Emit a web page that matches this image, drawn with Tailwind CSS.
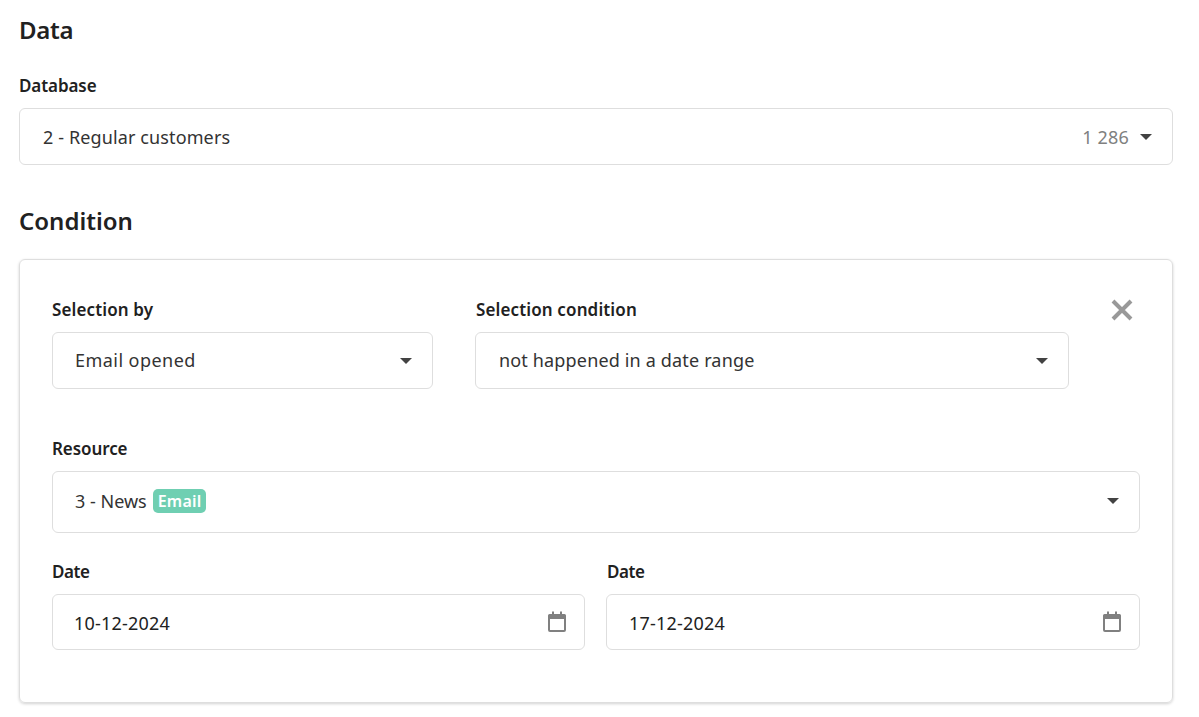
<!DOCTYPE html>
<html lang="en">
<head>
  <meta charset="UTF-8">
  <title>Condition</title>
  <script src="https://cdn.jsdelivr.net/npm/@tailwindcss/browser@4"></script>
</head>
<body class="bg-white h-[717px] overflow-hidden font-['Noto_Sans',sans-serif] text-[#212121]">
  <div class="w-[1154px] ml-[19px]">
    <!-- Data -->
    <h2 class="h-[24px] mt-[18px] text-[24px] leading-[24px] font-semibold tracking-[-0.3px]">Data</h2>
    <label class="block mt-[32px] h-[24px] text-[17px] leading-[24px] font-semibold tracking-[-0.08px]">Database</label>
    <div class="mt-[10px] h-[57px] flex items-center justify-between pl-[23px] pr-[20px] pt-[1px] border border-[#dedede] rounded-[6px] text-[18px] text-[#333] tracking-[0.12px]">
      <span>2 - Regular customers</span>
      <span class="flex items-center gap-[11px]">
        <span class="text-[#808080] tracking-[0.2px]">1 286</span>
        <span class="w-0 h-0 border-x-[6px] border-x-transparent border-t-[6px] border-t-[#424242]"></span>
      </span>
    </div>

    <!-- Condition -->
    <h2 class="mt-[42px] h-[28px] text-[24px] leading-[28px] font-semibold">Condition</h2>
    <div class="mt-[24px] h-[444px] px-[32px] pt-[38px] border border-[#dedede] rounded-[6px] shadow-[0_1px_3px_rgba(0,0,0,0.18)]">
      <div class="flex">
        <div class="w-[381px]">
          <label class="block h-[24px] text-[17px] leading-[24px] font-semibold tracking-[0.13px]">Selection by</label>
          <div class="mt-[10px] h-[57px] flex items-center justify-between pl-[22px] pr-[20px] border border-[#dedede] rounded-[6px] text-[18px] text-[#333] tracking-[0.45px]">
            <span>Email opened</span>
            <span class="w-0 h-0 border-x-[6px] border-x-transparent border-t-[6px] border-t-[#424242]"></span>
          </div>
        </div>
        <div class="w-[594px] ml-[42px]">
          <label class="block h-[24px] pl-[1px] text-[17px] leading-[24px] font-semibold tracking-[0.13px]">Selection condition</label>
          <div class="mt-[10px] h-[57px] flex items-center justify-between pl-[23px] pr-[20px] border border-[#dedede] rounded-[6px] text-[18px] text-[#333] tracking-[0.16px]">
            <span>not happened in a date range</span>
            <span class="w-0 h-0 border-x-[6px] border-x-transparent border-t-[6px] border-t-[#424242]"></span>
          </div>
        </div>
        <svg class="ml-[40.500px] w-[24px] h-[24px]" viewBox="0 0 24 24" fill="none" stroke="#999" stroke-width="4">
          <path d="M3 3L21 21M21 3L3 21"/>
        </svg>
      </div>

      <label class="block mt-[48px] h-[24px] text-[17px] leading-[24px] font-semibold tracking-[-0.08px]">Resource</label>
      <div class="mt-[10px] h-[62px] flex items-center justify-between pl-[22px] pr-[20px] pb-[2px] border border-[#dedede] rounded-[6px] text-[18px] text-[#333]">
        <span class="flex items-center gap-[6px]">
          <span>3 - News</span>
          <span class="h-[24px] px-[5px] rounded-[5px] bg-[#6fcfb2] text-white text-[16px] leading-[24px] font-semibold tracking-[0.2px]">Email</span>
        </span>
        <span class="w-0 h-0 border-x-[6px] border-x-transparent border-t-[6px] border-t-[#424242]"></span>
      </div>

      <div class="flex gap-[21px] mt-[27px]">
        <div class="w-[533px]">
          <label class="block h-[24px] text-[17px] leading-[24px] font-semibold tracking-[-0.45px]">Date</label>
          <div class="mt-[10px] h-[56px] flex items-center justify-between pl-[21px] pr-[17px] pt-[3px] border border-[#dedede] rounded-[6px] text-[18px] text-[#212121] tracking-[0.2px]">
            <span>10-12-2024</span>
            <svg class="w-[20px] h-[22px] mt-[-3px]" viewBox="0 0 20 22" fill="#808080">
              <path d="M5 0.5h2V3h6V0.5h2V3h2.500A1.500 1.500 0 0 1 19 4.500V19a2 2 0 0 1-2 2H3a2 2 0 0 1-2-2V4.500A1.500 1.500 0 0 1 2.500 3H5zM3 8v11h14V8z"/>
            </svg>
          </div>
        </div>
        <div class="w-[534px]">
          <label class="block h-[24px] pl-[1px] text-[17px] leading-[24px] font-semibold tracking-[-0.45px]">Date</label>
          <div class="mt-[10px] h-[56px] flex items-center justify-between pl-[22px] pr-[17px] pt-[3px] border border-[#dedede] rounded-[6px] text-[18px] text-[#212121] tracking-[0.2px]">
            <span>17-12-2024</span>
            <svg class="w-[20px] h-[22px] mt-[-3px]" viewBox="0 0 20 22" fill="#808080">
              <path d="M5 0.5h2V3h6V0.5h2V3h2.500A1.500 1.500 0 0 1 19 4.500V19a2 2 0 0 1-2 2H3a2 2 0 0 1-2-2V4.500A1.500 1.500 0 0 1 2.500 3H5zM3 8v11h14V8z"/>
            </svg>
          </div>
        </div>
      </div>
    </div>
  </div>
</body>
</html>
